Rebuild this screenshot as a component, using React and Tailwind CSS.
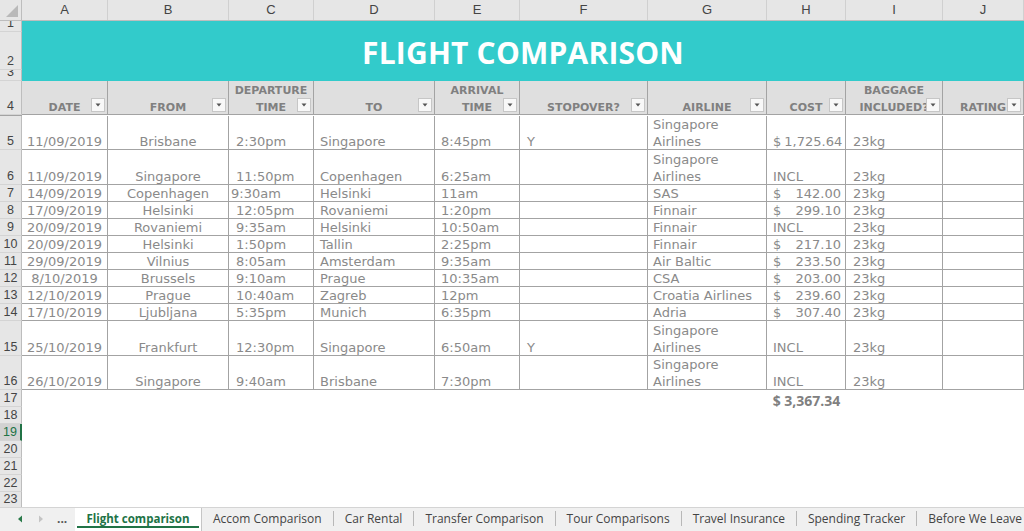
import React from "react";

const COLS = "grid grid-cols-[22px_86px_121px_85px_121px_85px_128px_119px_79px_97px_1fr]";
const DATA_FONT = { fontFamily: '"DejaVu Sans", sans-serif' };
const HEAD_FONT = { fontFamily: '"Liberation Sans", Arial, sans-serif' };
const UI_FONT = { fontFamily: '"Open Sans", "Noto Sans", sans-serif' };

const H = { 34: "h-[34px]", 35: "h-[35px]", 17: "h-[17px]", 16: "h-[16px]", 11: "h-[11px]", 38: "h-[38px]" };

const rows = [
  { n: 5, h: 34, date: "11/09/2019", from: "Brisbane", dep: "2:30pm", to: "Singapore", arr: "8:45pm", stop: "Y", air: "Singapore Airlines", cost: "1,725.64", bag: "23kg" },
  { n: 6, h: 35, date: "11/09/2019", from: "Singapore", dep: "11:50pm", to: "Copenhagen", arr: "6:25am", stop: "", air: "Singapore Airlines", cost: "INCL", bag: "23kg" },
  { n: 7, h: 17, date: "14/09/2019", from: "Copenhagen", dep: "9:30am", tight: true, to: "Helsinki", arr: "11am", stop: "", air: "SAS", cost: "142.00", bag: "23kg" },
  { n: 8, h: 17, date: "17/09/2019", from: "Helsinki", dep: "12:05pm", to: "Rovaniemi", arr: "1:20pm", stop: "", air: "Finnair", cost: "299.10", bag: "23kg" },
  { n: 9, h: 17, date: "20/09/2019", from: "Rovaniemi", dep: "9:35am", to: "Helsinki", arr: "10:50am", stop: "", air: "Finnair", cost: "INCL", bag: "23kg" },
  { n: 10, h: 17, date: "20/09/2019", from: "Helsinki", dep: "1:50pm", to: "Tallin", arr: "2:25pm", stop: "", air: "Finnair", cost: "217.10", bag: "23kg" },
  { n: 11, h: 17, date: "29/09/2019", from: "Vilnius", dep: "8:05am", to: "Amsterdam", arr: "9:35am", stop: "", air: "Air Baltic", cost: "233.50", bag: "23kg" },
  { n: 12, h: 17, date: "8/10/2019", from: "Brussels", dep: "9:10am", to: "Prague", arr: "10:35am", stop: "", air: "CSA", cost: "203.00", bag: "23kg" },
  { n: 13, h: 17, date: "12/10/2019", from: "Prague", dep: "10:40am", to: "Zagreb", arr: "12pm", stop: "", air: "Croatia Airlines", cost: "239.60", bag: "23kg" },
  { n: 14, h: 17, date: "17/10/2019", from: "Ljubljana", dep: "5:35pm", to: "Munich", arr: "6:35pm", stop: "", air: "Adria", cost: "307.40", bag: "23kg" },
  { n: 15, h: 35, date: "25/10/2019", from: "Frankfurt", dep: "12:30pm", to: "Singapore", arr: "6:50am", stop: "Y", air: "Singapore Airlines", cost: "INCL", bag: "23kg" },
  { n: 16, h: 34, date: "26/10/2019", from: "Singapore", dep: "9:40am", to: "Brisbane", arr: "7:30pm", stop: "", air: "Singapore Airlines", cost: "INCL", bag: "23kg" },
];

function RowNum({ n, selected }) {
  return (
    <div
      className={
        "flex items-end justify-center overflow-hidden border-b border-[#d4d4d4] text-[12.5px] leading-[16px] " +
        (selected
          ? "bg-[#d2d2d2] text-[#217346] border-r-2 border-r-[#217346]"
          : "bg-[#e6e6e6] text-[#444] border-r border-r-[#bdbdbd]")
      }
      style={HEAD_FONT}
    >
      {n}
    </div>
  );
}

function Cell({ children, className = "" }) {
  return (
    <div className={"flex items-end overflow-hidden whitespace-nowrap border-r border-b border-[#a3a3a3] text-[13px] leading-[17px] text-[#8a8a8a] " + className}>
      {children}
    </div>
  );
}

function FilterBtn() {
  return (
    <div className="absolute right-[2px] bottom-[2px] flex h-[14px] w-[14px] items-center justify-center border border-[#c6c6c6] bg-[#f8f8f8]">
      <svg width="6" height="4" viewBox="0 0 6 4">
        <path d="M0.5 0.5 L5.5 0.5 L3 3.5 Z" fill="#555" />
      </svg>
    </div>
  );
}

function HeadCell({ lines }) {
  return (
    <div className="relative flex flex-col items-center justify-end overflow-hidden border-r border-b border-[#a3a3a3] bg-[#dfdfdf] text-[11px] font-bold leading-[17px] text-[#808080]" style={DATA_FONT}>
      <div className="relative top-[2px] flex flex-col items-center">
        {lines.map((l, i) => (
          <span key={i} className="whitespace-nowrap">{l}</span>
        ))}
      </div>
      <FilterBtn />
    </div>
  );
}

export default function App() {
  const letters = ["A", "B", "C", "D", "E", "F", "G", "H", "I", "J"];
  return (
    <div className="flex h-[531px] w-[1024px] flex-col overflow-hidden bg-white">
      <div className="flex-1 overflow-hidden">
        {/* column letters */}
        <div className={COLS + " h-[21px] bg-[#e6e6e6] border-b border-[#bdbdbd]"}>
          <div className="relative border-r border-[#bdbdbd]">
            <svg className="absolute right-[3px] bottom-[3px]" width="12" height="12" viewBox="0 0 12 12">
              <path d="M12 0 L12 12 L0 12 Z" fill="#b9b9b9" />
            </svg>
          </div>
          {letters.map((l) => (
            <div key={l} className="flex items-center justify-center border-r border-[#d0d0d0] text-[13px] text-[#444]" style={HEAD_FONT}>
              {l}
            </div>
          ))}
          <div />
        </div>

        {/* title band rows 1-3 */}
        <div className="flex h-[60px]">
          <div className="flex w-[22px] shrink-0 flex-col">
            <div className={"grid " + H[11]}><RowNum n={1} /></div>
            <div className={"grid " + H[38]}><RowNum n={2} /></div>
            <div className={"grid " + H[11]}><RowNum n={3} /></div>
          </div>
          <div className="flex flex-1 items-center justify-center bg-[#32cbcb] pt-[2px]">
            <span className="text-[30px] font-bold tracking-[0.2px] text-white" style={UI_FONT}>
              FLIGHT COMPARISON
            </span>
          </div>
        </div>

        {/* header row 4 */}
        <div className={COLS + " h-[35px]"}>
          <RowNum n={4} />
          <HeadCell lines={["DATE"]} />
          <HeadCell lines={["FROM"]} />
          <HeadCell lines={["DEPARTURE", "TIME"]} />
          <HeadCell lines={["TO"]} />
          <HeadCell lines={["ARRIVAL", "TIME"]} />
          <HeadCell lines={["STOPOVER?"]} />
          <HeadCell lines={["AIRLINE"]} />
          <HeadCell lines={["COST"]} />
          <HeadCell lines={["BAGGAGE", "INCLUDED?"]} />
          <HeadCell lines={["RATING"]} />
          <div className="border-b border-[#a3a3a3] bg-[#dfdfdf]" />
        </div>

        {/* data rows */}
        {rows.map((r) => (
          <div key={r.n} className={COLS + " " + H[r.h]} style={DATA_FONT}>
            <RowNum n={r.n} />
            <Cell className="justify-center"><span className="relative top-[1px]">{r.date}</span></Cell>
            <Cell className="justify-center"><span className="relative top-[1px]">{r.from}</span></Cell>
            <Cell className={r.tight ? "pl-[2px]" : "pl-[7px]"}><span className="relative top-[1px]">{r.dep}</span></Cell>
            <Cell className="pl-[6px]"><span className="relative top-[1px]">{r.to}</span></Cell>
            <Cell className="pl-[6px]"><span className="relative top-[1px]">{r.arr}</span></Cell>
            <Cell className="pl-[7px]"><span className="relative top-[1px]">{r.stop}</span></Cell>
            <Cell className="pl-[5px] pr-[2px] !whitespace-normal">
              <div className="relative top-[1px] leading-[17px]">{r.air}</div>
            </Cell>
            {r.cost === "INCL" ? (
              <Cell className="pl-[6px]"><span className="relative top-[1px]">INCL</span></Cell>
            ) : (
              <Cell className="justify-between gap-[3px] pl-[6px] pr-[4px]">
                <span className="relative top-[1px]">$</span>
                <span className="relative top-[1px]">{r.cost}</span>
              </Cell>
            )}
            <Cell className="pl-[7px]"><span className="relative top-[1px]">{r.bag}</span></Cell>
            <Cell />
            <div />
          </div>
        ))}

        {/* empty rows 17-23 */}
        {[17, 18, 19, 20, 21, 22, 23].map((n) => (
          <div key={n} className={COLS + " " + (n === 23 ? H[16] : H[17])}>
            <RowNum n={n} selected={n === 19} />
            {n === 17 ? (
              <>
                <div /><div /><div /><div /><div /><div /><div />
                <div className="flex items-end justify-center text-[14px] font-bold leading-[17px] text-[#808080]" style={UI_FONT}>
                  <span className="relative top-[2px]">$ 3,367.34</span>
                </div>
              </>
            ) : null}
          </div>
        ))}
      </div>

      {/* sheet tabs */}
      <div className="flex h-[24px] shrink-0 items-stretch border-t border-[#d4d4d4] bg-[#f0f0f0] pb-[2px] text-[12px] text-[#444]" style={UI_FONT}>
        <div className="flex w-[75px] shrink-0 items-center">
          <svg className="ml-[17px]" width="6" height="8" viewBox="0 0 6 8">
            <path d="M5 0.5 L1 4 L5 7.5 Z" fill="#2a7a4a" />
          </svg>
          <svg className="ml-[15px]" width="6" height="8" viewBox="0 0 6 8">
            <path d="M1 0.5 L5 4 L1 7.5 Z" fill="#c4c4c4" />
          </svg>
          <span className="ml-[13px] text-[12px] font-bold text-[#555]">...</span>
        </div>
        <div className="relative -mb-[2px] flex w-[127px] shrink-0 items-center justify-center border-r border-[#c6c6c6] bg-white pb-[2px] text-[11.5px] font-bold text-[#217346]">
          Flight comparison
          <div className="absolute bottom-[3px] left-[2px] right-[2px] h-[2px] bg-[#217346]" />
        </div>
        {["Accom Comparison", "Car Rental", "Transfer Comparison", "Tour Comparisons", "Travel Insurance", "Spending Tracker", "Before We Leave"].map((t, i, a) => (
          <div key={t} className={"flex shrink-0 items-center whitespace-nowrap px-[11px] " + (i < a.length - 1 ? "border-r border-[#b8b8b8] my-[3px]" : "")}>
            {t}
          </div>
        ))}
      </div>
    </div>
  );
}
